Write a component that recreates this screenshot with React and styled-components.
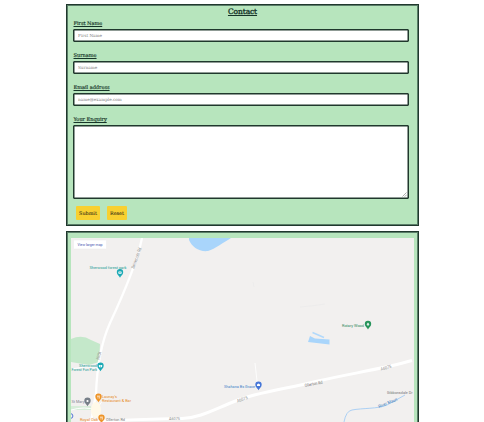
import React from "react";
import styled, { createGlobalStyle } from "styled-components";

const GlobalStyle = createGlobalStyle`
  * { box-sizing: border-box; }
  body {
    margin: 0;
    background: #fff;
    overflow: hidden;
    font-family: "DejaVu Serif", serif;
    color: #163528;
  }
`;

const Page = styled.main`
  width: 353px;
  height: 422px;
  margin-left: 66px;
  padding-top: 4px;
  display: flex;
  flex-direction: column;
  gap: 5px;
  overflow: hidden;
`;

const Panel = styled.section`
  flex: none;
  height: ${(p) => p.$height}px;
  background: #b7e5bd;
  border: 1px solid #20382d;
  box-shadow: inset 0 0 0 1px #5a7d68;
  padding: 1px;
`;

const Form = styled.form`
  display: flex;
  flex-direction: column;
  padding: 0 8px 0 5px;
`;

const Title = styled.h1`
  margin: 0 -3px 0 0;
  height: 13px;
  font-family: "DejaVu Serif", serif;
  font-size: 7.5px;
  line-height: 11px;
  font-weight: 400;
  text-align: center;
  text-decoration: underline;
  letter-spacing: -0.1px;
  -webkit-text-stroke: 0.35px currentColor;
`;

const Field = styled.label`
  display: flex;
  flex-direction: column;
  height: ${(p) => p.$height}px;
`;

const Caption = styled.span`
  height: 10px;
  padding-left: 0.5px;
  font-size: 5.1px;
  line-height: 9px;
  text-decoration: underline;
  letter-spacing: -0.05px;
  -webkit-text-stroke: 0.15px currentColor;
`;

const Input = styled.input`
  width: 100%;
  height: 13px;
  padding: 0 4px;
  border: 1px solid #20382d;
  box-shadow: inset 0 0 0 0.5px #20382d;
  border-radius: 1px;
  background: #fff;
  font: 4.2px "DejaVu Serif", serif;
  outline: 0;
  &::placeholder { color: #808080; opacity: 1; }
`;

const TextArea = styled.textarea`
  width: 100%;
  height: 74px;
  border: 1px solid #20382d;
  box-shadow: inset 0 0 0 0.5px #20382d;
  border-radius: 1px;
  background: #fff;
  resize: none;
  outline: 0;
`;

const AreaBox = styled.span`
  position: relative;
  display: flex;
`;

const Grip = styled.svg`
  position: absolute;
  right: 2px;
  bottom: 2px;
`;

const Actions = styled.div`
  display: flex;
  gap: 7px;
  padding: 7px 0 0 3px;
`;

const Button = styled.button`
  width: ${(p) => p.$width}px;
  height: 14px;
  padding: 0;
  border: 0;
  border-radius: 1px;
  background: #f8d030;
  color: #3b3519;
  font: 4.9px/14px "DejaVu Serif", serif;
  -webkit-text-stroke: 0.1px currentColor;
`;

const MapDrawing = styled.svg`
  display: block;
  margin: 5px 0 0 3px;
  background: #f2f0ef;
  font-family: "Roboto", sans-serif;
  font-size: 4.4px;
`;

const pinPaths = {
  dot: <circle r="1.1" fill="#fff" />,
  tree: <path d="M0-1.8 1.5.5H.4V1.6H-.4V.5H-1.5Z" fill="#fff" />,
  camera: <><rect x="-1.6" y="-1" width="3.2" height="2.2" rx=".4" fill="#fff" /><circle r=".6" fill="#1ba9b5" /></>,
  bed: <path d="M-1.5 1V-.4L0-1.6 1.5-.4V1Z" fill="#fff" />,
  food: <path d="M-1-1.5V0M0-1.5V0M-.5-.1V1.6M1-1.5V1.6" stroke="#fff" strokeWidth=".55" />,
};

const Pin = ({ x, y, color, kind = "dot" }) => (
  <g transform={`translate(${x} ${y})`}>
    <path d="M0 5.2C-.6 3.2-3.2 2.2-3.2-.3A3.2 3.2 0 0 1 3.2-.3C3.2 2.2.6 3.2 0 5.2Z" fill={color} />
    {pinPaths[kind]}
  </g>
);

const Place = ({ x, y, w, color, turn = 0, size, children }) => (
  <text x={x} y={y} fill={color} fontSize={size} textLength={w} lengthAdjust="spacingAndGlyphs"
    transform={`rotate(${turn} ${x} ${y})`}>{children}</text>
);

const AreaMap = () => (
  <MapDrawing width="343" height="184" viewBox="71 238 343 184">
    <path d="M189 238H231C224 242 215 249 208 251C199 252 192 247 189 240Z" fill="#a9d5fb" />
    <path d="M71 339Q82 334 91 340L100 344 99 362 89 365 71 362Z" fill="#c4e8ca" />
    <path d="M71 406H91L92 410H71Z" fill="#d8edda" />
    <path d="M71 369Q85 366 98 367" fill="none" stroke="#fff" />
    <path d="M310 336 315 338.5 329.5 339.5V344.5L308 342Z" fill="#a9d5fb" />
    <path d="M312.5 332.5 324 337.5" stroke="#b2d9fb" strokeWidth="1.5" />
    <g fill="none" stroke="#fff">
      <path d="M142 238C138 258 124 293 110 323C101 343 97 365 96 394L91 422" strokeWidth="2.3" />
      <path d="M86 422Q140 419 182 418.5C199 418 213 410 233 402C260 391 288 389 318 381C353 373 382 369 412 360.5" strokeWidth="3" />
      <path d="M255 363 258 390" strokeWidth=".8" />
      <path d="M71 410Q85 406 96 410L103 400" strokeWidth="1" />
    </g>
    <ellipse cx="96" cy="410" rx="5" ry="8" fill="#fff9e8" />
    <path d="M344 422Q346 411 352 410C362 408 378 409 387 405L405 395" fill="none" stroke="#acd0f4" strokeWidth="1" />
    <path d="M300 307Q313 306 325 304M253 282 254 287" fill="none" stroke="#e9e9e9" strokeWidth=".6" />

    <rect x="73.5" y="240" width="33" height="9" rx=".6" fill="#fff" stroke="#eaeaea" strokeWidth=".5" />
    <Place x="77.5" y="246" w="25" color="#4450b0">View larger map</Place>

    <Place x="89.5" y="268.5" w="37" color="#219b93">Sherwood forest park</Place>
    <Pin x="120" y="272.5" color="#1ba9b5" kind="camera" />
    <Place x="134" y="269" w="22" color="#888" turn={-70}>Swinecote Rd</Place>

    <Place x="79" y="366.5" w="18" color="#219b93">Sherwood</Place>
    <Place x="71.5" y="370.5" w="25.5" color="#219b93">Forest Fun Park</Place>
    <Pin x="100.5" y="366" color="#1ba9b5" kind="camera" />
    <Place x="99" y="360" w="8" color="#888" turn={-72}>B6034</Place>

    <Place x="71.5" y="403.3" w="13" color="#7b8290">St Mary</Place>
    <Pin x="87.5" y="401" color="#777f88" />
    <Pin x="98.5" y="397" color="#ee9429" kind="food" />
    <Place x="102" y="398" w="15" color="#e78b28">Launay's</Place>
    <Place x="102" y="402" w="29" color="#e78b28">Restaurant &amp; Bar</Place>
    <Place x="80" y="420.5" w="18" color="#e78b28">Royal Oak</Place>
    <Pin x="101.5" y="418" color="#ee9429" kind="food" />
    <circle cx="70.5" cy="416" r="2.4" fill="none" stroke="#5679d8" />
    <Place x="106" y="421" w="19" color="#777">Ollerton Rd</Place>
    <Place x="169" y="420" w="11" color="#888">A6075</Place>

    <Place x="224" y="388" w="31" color="#4383c8">Shahana Bs Grace</Place>
    <Pin x="258.5" y="385" color="#4777d8" kind="bed" />
    <Place x="237.5" y="402.5" w="11" color="#888" turn={-19}>A6075</Place>
    <Place x="305" y="387" w="18" color="#777" turn={-11}>Ollerton Rd</Place>
    <Place x="381" y="370.5" w="11" color="#888" turn={-14}>A6075</Place>

    <Place x="342" y="326.7" w="22" color="#31885c">Rotary Wood</Place>
    <Pin x="368" y="324.3" color="#27945b" kind="tree" />
    <Place x="387" y="394.3" w="25.5" size="3.8" color="#777">Gibbonsdale Dr</Place>
    <Place x="379" y="408" w="20" color="#4c83bd" turn={-22}>River Maun</Place>
  </MapDrawing>
);

export default function App() {
  return (
    <>
      <GlobalStyle />
      <Page>
        <Panel $height={222}>
          <Form>
            <Title>Contact</Title>
            <Field $height={32}>
              <Caption>First Name</Caption>
              <Input placeholder="First Name" />
            </Field>
            <Field $height={32}>
              <Caption>Surname</Caption>
              <Input placeholder="Surname" />
            </Field>
            <Field $height={32}>
              <Caption>Email address</Caption>
              <Input placeholder="name@example.com" />
            </Field>
            <Field $height={84}>
              <Caption>Your Enquiry</Caption>
              <AreaBox>
                <TextArea />
                <Grip width="5" height="5" viewBox="0 0 5 5">
                  <path d="M.5 4.5 4.5.5M2.7 4.7 4.7 2.7" stroke="#777" strokeWidth=".6" />
                </Grip>
              </AreaBox>
            </Field>
            <Actions>
              <Button type="submit" $width={24}>Submit</Button>
              <Button type="reset" $width={20}>Reset</Button>
            </Actions>
          </Form>
        </Panel>
        <Panel $height={200}>
          <AreaMap />
        </Panel>
      </Page>
    </>
  );
}
